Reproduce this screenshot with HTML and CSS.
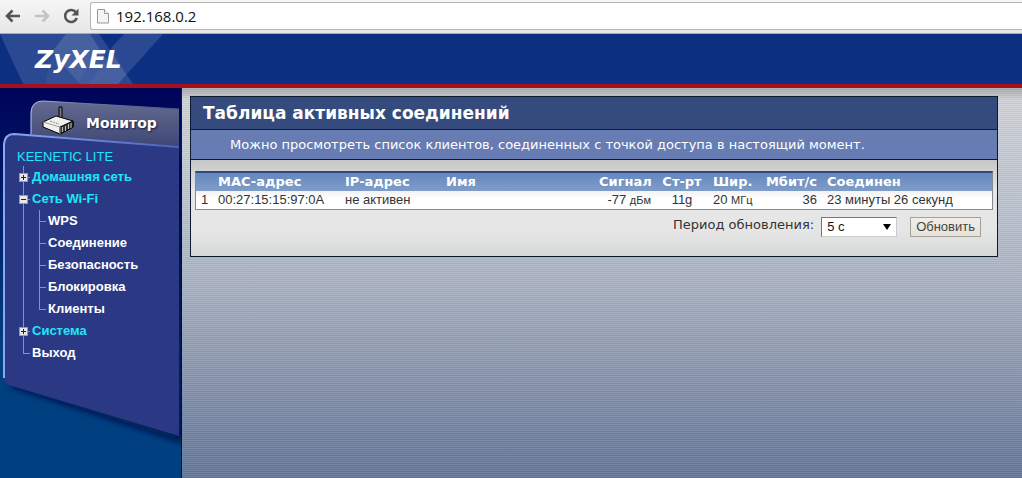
FILE: index.html
```html
<!DOCTYPE html>
<html lang="ru">
<head>
  <meta charset="utf-8">
  <title>ZyXEL Keenetic Lite</title>
  <link rel="stylesheet" href="styles.css">
</head>
<body>
  <div class="toolbar">
    <button class="tool" aria-label="Назад">
      <svg width="18" height="18" viewBox="0 0 18 18"><path d="M16 9H3M8.500 3.500L3 9l5.500 5.500" fill="none" stroke="#555" stroke-width="2.600"/></svg>
    </button>
    <button class="tool" aria-label="Вперед">
      <svg width="18" height="18" viewBox="0 0 18 18"><path d="M2 9h13M9.500 3.500L15 9l-5.500 5.500" fill="none" stroke="#c4c4c4" stroke-width="2.600"/></svg>
    </button>
    <button class="tool" aria-label="Обновить страницу">
      <svg width="18" height="18" viewBox="0 0 18 18"><path d="M14 5.500A6 6 0 1 0 14.800 11" fill="none" stroke="#555" stroke-width="2.600"/><path d="M16.500 1.500v7h-7z" fill="#555"/></svg>
    </button>
    <div class="address">
      <svg width="12" height="16" viewBox="0 0 12 16"><path d="M.5 1.500h7l4 4v9.500H.5z" fill="#f4f4f4" stroke="#999"/><path d="M7.500 1.500v4h4" fill="#fff" stroke="#999"/></svg>
      <input type="text" value="192.168.0.2" aria-label="Адрес">
    </div>
  </div>

  <header class="banner">
    <svg class="banner-art" width="164" height="50" viewBox="0 0 164 50">
      <path d="M0 0H99L133 50H23z" fill="#fff" fill-opacity=".13"/>
      <path d="M66 0H90L108 28L88 50H80L52 18z" fill="#fff" fill-opacity=".1"/>
      <path d="M66 0H90L99 14L78 50H45L52 18z" fill="#fff" fill-opacity=".04"/>
      <path d="M124 0H163L118 50H88L113 22L111 14z" fill="#fff" fill-opacity=".13"/>
    </svg>
    <span class="logo">ZyXEL</span>
  </header>

  <div class="layout">
    <nav class="sidebar">
      <svg class="sidebar-art" width="182" height="390" viewBox="0 0 182 390">
        <defs>
          <linearGradient id="tab" x1="0" y1="0" x2="0" y2="1">
            <stop offset="0" stop-color="#646b90"/>
            <stop offset="1" stop-color="#3d4574"/>
          </linearGradient>
          <linearGradient id="edge" gradientUnits="userSpaceOnUse" x1="0" y1="0" x2="180" y2="0">
            <stop offset="0" stop-color="#8ca8f5"/>
            <stop offset="1" stop-color="#4a62b8"/>
          </linearGradient>
          <linearGradient id="rim" gradientUnits="userSpaceOnUse" x1="30" y1="0" x2="179" y2="0">
            <stop offset="0" stop-color="#c0c8ee"/>
            <stop offset=".3" stop-color="#7780a8"/>
            <stop offset="1" stop-color="#4c547e"/>
          </linearGradient>
          <filter id="shade"><feGaussianBlur stdDeviation="3"/></filter>
        </defs>
        <path d="M31 60V24Q32 13 43 13L179 21V60z" fill="url(#tab)"/>
        <path d="M31 48V24Q32 13 43 13L179 21" fill="none" stroke="url(#rim)"/>
        <path d="M12 296L180 351V70" fill="none" stroke="#020b3c" stroke-width="5" filter="url(#shade)"/>
        <path d="M3 290V56Q4 45 14 45L179 58V348L12 298Q4 295 3 290z" fill="#2b3985"/>
        <path d="M4 290V56Q5 46 14 46L179 59" fill="none" stroke="url(#edge)" stroke-width="2"/>
      </svg>
      <div class="tab">
        <svg class="router" width="32" height="30" viewBox="0 0 32 30">
          <path d="M17 1h3v14h-3z" fill="#777" stroke="#000"/>
          <path d="M1 16L14 10L31 15V21L18 28L1 21z" fill="#f1f1ec" stroke="#000"/>
          <path d="M18 21L31 15V21L18 28z" fill="#333" stroke="#000"/>
          <path d="M1 16L18 21V28" fill="none" stroke="#999"/>
          <path d="M20.500 21v5M23.500 20v5M26.500 18v5M29 17v5" stroke="#bbb"/>
          <path d="M8 15l9 3" stroke="#888" stroke-dasharray="2 1"/>
        </svg>
        <span>Монитор</span>
      </div>
      <a class="device" href="#">KEENETIC LITE</a>
      <ul class="tree">
        <li><button class="toggle plus" aria-label="Развернуть"></button><a class="group" href="#">Домашняя сеть</a></li>
        <li><button class="toggle" aria-label="Свернуть"></button><a class="group" href="#">Сеть Wi-Fi</a>
          <ul class="subtree">
            <li><a href="#">WPS</a></li>
            <li><a href="#">Соединение</a></li>
            <li><a href="#">Безопасность</a></li>
            <li><a href="#">Блокировка</a></li>
            <li><a href="#">Клиенты</a></li>
          </ul>
        </li>
        <li><button class="toggle plus" aria-label="Развернуть"></button><a class="group" href="#">Система</a></li>
        <li><a class="leaf" href="#">Выход</a></li>
      </ul>
    </nav>

    <main class="content">
      <section class="panel">
        <h1>Таблица активных соединений</h1>
        <p class="hint">Можно просмотреть список клиентов, соединенных с точкой доступа в настоящий момент.</p>
        <div class="panel-body">
          <table>
            <thead>
              <tr>
                <th class="c-num"></th>
                <th class="c-mac">MAC-адрес</th>
                <th class="c-ip">IP-адрес</th>
                <th class="c-name">Имя</th>
                <th class="c-signal right">Сигнал</th>
                <th class="c-std center">Ст-рт</th>
                <th class="c-band">Шир.</th>
                <th class="c-rate right">Мбит/с</th>
                <th>Соединен</th>
              </tr>
            </thead>
            <tbody>
              <tr>
                <td>1</td>
                <td>00:27:15:15:97:0A</td>
                <td>не активен</td>
                <td></td>
                <td class="right">-77 <small>дБм</small></td>
                <td class="center">11g</td>
                <td>20 <small>МГц</small></td>
                <td class="right">36</td>
                <td>23 минуты 26 секунд</td>
              </tr>
            </tbody>
          </table>
          <form class="refresh">
            <label for="period">Период обновления:</label>
            <span class="select">
              <select id="period">
                <option>5 с</option>
              </select>
            </span>
            <button type="button" class="button">Обновить</button>
          </form>
        </div>
      </section>
    </main>
  </div>
</body>
</html>
```
FILE: styles.css
```css
* { box-sizing: border-box; }
body {
  margin: 0;
  min-height: 100vh;
  display: flex;
  flex-direction: column;
  font: 13px/18px "Liberation Sans", Arial, sans-serif;
  color: #333;
}
a { color: inherit; text-decoration: none; }

/* browser toolbar */
.toolbar {
  display: flex;
  align-items: center;
  height: 34px;
  padding: 0 0 2px 4px;
  gap: 11px;
  background: linear-gradient(#f6f6f6, #e6e6e6);
  border-bottom: 1px solid #a9a9a9;
}
.tool { display: flex; padding: 0; border: 0; background: none; }
.address {
  flex: 1;
  display: flex;
  align-items: center;
  gap: 7px;
  height: 28px;
  margin-left: -1px;
  padding-left: 6px;
  background: #fff;
  border: 1px solid #b4b4b4;
  border-right: 0;
  border-radius: 3px 0 0 3px;
}
.address input {
  flex: 1;
  padding: 0;
  border: 0;
  outline: 0;
  font: 15px/20px "Open Sans", sans-serif;
  color: #111;
}

/* banner */
.banner {
  position: relative;
  height: 54px;
  padding: 11px 35px;
  background: #0c2f82;
  border-bottom: 4px solid #a3101e;
}
.banner-art { position: absolute; left: 0; top: 0; }
.logo {
  position: relative;
  font: italic bold 25px/30px "DejaVu Sans", Verdana, sans-serif;
  color: #fff;
}

.layout { flex: 1; display: flex; }

/* side menu */
.sidebar {
  position: relative;
  width: 182px;
  padding-top: 24px;
  background: linear-gradient(#000459, #003f80 260px);
  border-right: 1px solid #05175c;
  font-weight: bold;
  color: #fff;
}
.sidebar-art { position: absolute; left: 0; top: 0; }
.tab {
  position: relative;
  display: flex;
  align-items: center;
  gap: 12px;
  height: 36px;
  padding: 0 0 14px 42px;
  font: bold 14px/20px "DejaVu Sans", Verdana, sans-serif;
  text-shadow: 1px 1px 2px #111a44;
}
.router { margin-top: -4px; }
.device {
  position: relative;
  display: block;
  padding-left: 17px;
  font-weight: normal;
  color: #1fe6f5;
}
.tree, .subtree { list-style: none; margin: 0; padding: 0; }
.tree { position: relative; padding-left: 19px; line-height: 22px; }
.tree li {
  background:
    linear-gradient(#8791c4, #8791c4) 4px 0 / 1px 100% no-repeat,
    linear-gradient(#8791c4, #8791c4) 4px 11px / 7px 1px no-repeat;
}
.tree li:last-child {
  background:
    linear-gradient(#8791c4, #8791c4) 4px 0 / 1px 11px no-repeat,
    linear-gradient(#8791c4, #8791c4) 4px 11px / 7px 1px no-repeat;
}
.subtree { margin-left: 16px; }
.subtree a, .leaf { display: block; padding-left: 13px; }
.group { color: #1fe6f5; }
.toggle {
  width: 9px;
  height: 9px;
  margin: 0 4px 0 0;
  padding: 0;
  border: 1px solid #999;
  background: linear-gradient(#222, #222) center / 5px 1px no-repeat, #e8e8e8;
}
.plus {
  background:
    linear-gradient(#222, #222) center / 5px 1px no-repeat,
    linear-gradient(#222, #222) center / 1px 5px no-repeat,
    #e8e8e8;
}

/* content */
.content {
  flex: 1;
  padding: 8px 24px 8px 8px;
  background:
    linear-gradient(rgba(90, 90, 90, .35), rgba(90, 90, 90, 0) 12px),
    repeating-linear-gradient(rgba(255, 255, 255, .1) 0 1px, rgba(40, 50, 80, .08) 1px 2px),
    linear-gradient(#d4d6da, #bcc3cf 120px, #a9b2c3 200px, #8f9bb1 270px, #7384a3 340px, #627698);
}
.panel { border: 1px solid #0b1c30; background: #e6e6e6; }
.panel h1 {
  margin: 0;
  padding: 6px 12px;
  font: bold 17px/20px "DejaVu Sans", Verdana, sans-serif;
  color: #fff;
  background: #354b7e;
  border-bottom: 1px solid #0b1c30;
}
.hint {
  margin: 0;
  padding: 5px 39px 4px;
  font: 13px/20px "DejaVu Sans", Verdana, sans-serif;
  color: #fff;
  background: #667cb3;
  border-bottom: 1px solid #0b1c30;
}
.panel-body {
  padding: 11px 4px 19px;
  background: linear-gradient(#c6c6c6, #e6e6e6 30px, #e6e6e6 70px, #d6d8d9);
}
table {
  width: 100%;
  table-layout: fixed;
  border-collapse: separate;
  border-spacing: 0;
  border: 1px solid #858b93;
  border-top: 2px solid #2b4a80;
  background: #fff;
}
th, td { padding: 0 5px; text-align: left; white-space: nowrap; }
th {
  font: bold 13px/18px "DejaVu Sans", Verdana, sans-serif;
  color: #fff;
}
thead { background: linear-gradient(#6487bf, #7f9dc8); }
tbody { background: linear-gradient(#f2f2f2, #fff 8px); }
small { font-size: 11px; }
.right { text-align: right; }
.center { text-align: center; }
.c-num { width: 17px; }
.c-mac { width: 127px; }
.c-ip { width: 101px; }
.c-name { width: 153px; }
.c-signal { width: 62px; }
.c-std { width: 52px; }
.c-band { width: 49px; }
.c-rate { width: 65px; }

.refresh {
  display: flex;
  justify-content: flex-end;
  padding: 7px 12px 0 0;
  font: 13px/15px "DejaVu Sans", Verdana, sans-serif;
}
.select { position: relative; margin: 0 13px 0 7px; }
.select::after {
  content: "";
  position: absolute;
  right: 6px;
  top: 7px;
  border: 4px solid transparent;
  border-top: 6px solid #000;
  border-bottom: 0;
  pointer-events: none;
}
select, .button { height: 20px; font: 13px/16px "Liberation Sans", Arial, sans-serif; }
select {
  appearance: none;
  width: 76px;
  padding: 0 5px;
  border: 1px solid #777;
  border-color: #777 #ccc #ccc #777;
  border-radius: 0;
  background: #fff;
  color: #111;
}
.button {
  padding: 0 5px;
  border: 1px solid #a5a299;
  background: linear-gradient(#f1eeea, #e6e1da);
  color: #444;
}
```
